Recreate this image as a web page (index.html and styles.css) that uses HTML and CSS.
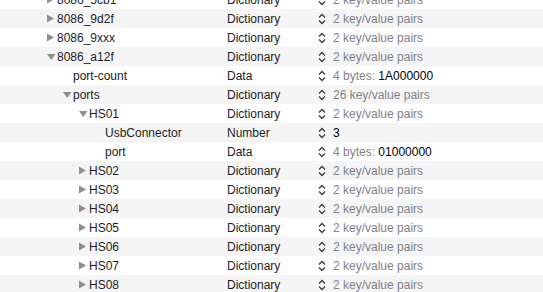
FILE: index.html
```html
<!DOCTYPE html>
<html lang="en">
<head>
    <meta charset="UTF-8">
    <title>Property list</title>
    <link rel="stylesheet" href="styles.css">
</head>
<body>
    <div class="plist" id="plist"></div>
    <script>
        var rows = [
            { key: '8086_5cb1', level: 1, tri: 'right', type: 'Dictionary', value: '2 key/value pairs' },
            { key: '8086_9d2f', level: 1, tri: 'right', type: 'Dictionary', value: '2 key/value pairs' },
            { key: '8086_9xxx', level: 1, tri: 'right', type: 'Dictionary', value: '2 key/value pairs' },
            { key: '8086_a12f', level: 1, tri: 'down', type: 'Dictionary', value: '2 key/value pairs' },
            { key: 'port-count', level: 2, type: 'Data', value: '4 bytes: ', strong: '1A000000' },
            { key: 'ports', level: 2, tri: 'down', type: 'Dictionary', value: '26 key/value pairs' },
            { key: 'HS01', level: 3, tri: 'down', type: 'Dictionary', value: '2 key/value pairs' },
            { key: 'UsbConnector', level: 4, type: 'Number', value: '', strong: '3' },
            { key: 'port', level: 4, type: 'Data', value: '4 bytes: ', strong: '01000000' },
            { key: 'HS02', level: 3, tri: 'right', type: 'Dictionary', value: '2 key/value pairs' },
            { key: 'HS03', level: 3, tri: 'right', type: 'Dictionary', value: '2 key/value pairs' },
            { key: 'HS04', level: 3, tri: 'right', type: 'Dictionary', value: '2 key/value pairs' },
            { key: 'HS05', level: 3, tri: 'right', type: 'Dictionary', value: '2 key/value pairs' },
            { key: 'HS06', level: 3, tri: 'right', type: 'Dictionary', value: '2 key/value pairs' },
            { key: 'HS07', level: 3, tri: 'right', type: 'Dictionary', value: '2 key/value pairs' },
            { key: 'HS08', level: 3, tri: 'right', type: 'Dictionary', value: '2 key/value pairs' }
        ];

        var triangles = {
            right: '<svg width="8" height="9" viewBox="0 0 8 9"><polygon points="0,0.5 7,4.5 0,8.5" fill="#8e8e8e"/></svg>',
            down: '<svg width="9" height="8" viewBox="0 0 9 8"><polygon points="0,1 8.5,1 4.25,7" fill="#8e8e8e"/></svg>'
        };
        var chevron = '<svg width="8" height="12" viewBox="0 0 8 12"><path d="M1 4.5 L4 1.5 L7 4.5 M1 7.5 L4 10.5 L7 7.5" fill="none" stroke="#3a3a3a" stroke-width="1.3"/></svg>';

        var html = '';
        rows.forEach(function(r) {
            html += '<div class="row">' +
                '<div class="key lv' + r.level + '">' +
                    '<span class="disclosure">' + (r.tri ? triangles[r.tri] : '') + '</span>' +
                    '<span class="name">' + r.key + '</span>' +
                '</div>' +
                '<div class="type">' + r.type + '</div>' +
                '<div class="value">' +
                    '<span class="stepper">' + chevron + '</span>' +
                    '<span class="muted">' + r.value + '</span>' +
                    (r.strong ? '<span class="strong">' + r.strong + '</span>' : '') +
                '</div>' +
            '</div>';
        });
        document.getElementById('plist').innerHTML = html;
    </script>
</body>
</html>
```

FILE: styles.css
```css
body {
    margin: 0;
    font-family: "Liberation Sans", Arial, sans-serif;
    font-size: 12px;
    color: #1d1d1f;
    background: #fff;
    overflow: hidden;
}
.plist {
    margin-top: -10px;
}
.row {
    display: flex;
    align-items: center;
    height: 19px;
}
.row:nth-child(even) {
    background-color: #f5f5f5;
}
.key {
    width: 227px;
    display: flex;
    align-items: center;
    box-sizing: border-box;
}
.lv1 { padding-left: 47px; }
.lv2 { padding-left: 63px; }
.lv3 { padding-left: 79px; }
.lv4 { padding-left: 95px; }
.disclosure {
    width: 10px;
    display: flex;
    align-items: center;
}
.type {
    width: 91px;
}
.value {
    display: flex;
    align-items: center;
}
.stepper {
    width: 15px;
    display: flex;
    align-items: center;
}
.muted {
    color: #818188;
    white-space: pre;
}
.strong {
    color: #000;
}
```
